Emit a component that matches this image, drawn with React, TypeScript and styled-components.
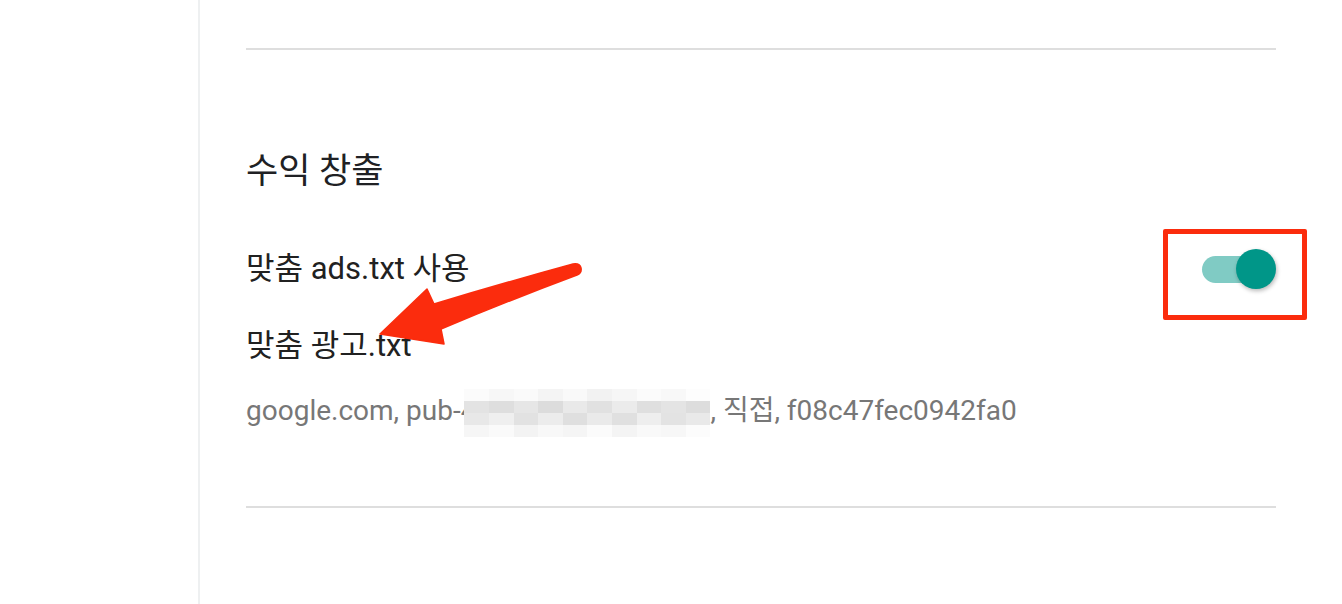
import React from 'react'
import styled, { createGlobalStyle } from 'styled-components'

const GlobalStyle = createGlobalStyle`
  html, body {
    margin: 0;
    padding: 0;
    background: #ffffff;
  }
  body {
    font-family: Roboto, "Noto Sans CJK KR", sans-serif;
  }
`

// pixelated blur that hides the publisher id
const mosaic = [
  ['#fbfbfb', '#f7f7f7', '#fafafa', '#f4f4f4', '#f9f9f9', '#f2f2f2', '#f6f6f6', '#fbfbfb', '#f8f8f8', '#fdfdfd'],
  ['#e3e3e3', '#dedede', '#e6e6e6', '#dcdcdc', '#e9e9e9', '#e1e1e1', '#ebebeb', '#dfdfdf', '#e4e4e4', '#dddddd'],
  ['#e8e8e8', '#efefef', '#e2e2e2', '#ececec', '#dfdfdf', '#eaeaea', '#e0e0e0', '#eeeeee', '#e3e3e3', '#e9e9e9'],
  ['#f6f6f6', '#fafafa', '#f3f3f3', '#f8f8f8', '#f5f5f5', '#fbfbfb', '#f4f4f4', '#f9f9f9', '#f7f7f7', '#fcfcfc'],
]

const App: React.FC = () => {
  return (
    <>
      <GlobalStyle />
      <StyledPage>
        <StyledSidebar />
        <StyledMain>
          <StyledDivider />
          <StyledSection>
            <StyledHeading>수익 창출</StyledHeading>
            <StyledSettingRow>
              <StyledLabel>맞춤 ads.txt 사용</StyledLabel>
              <StyledToggle>
                <StyledTrack />
                <StyledKnob />
                <StyledHighlight />
              </StyledToggle>
            </StyledSettingRow>
            <StyledFileName>맞춤 광고.txt</StyledFileName>
            <StyledRecord>
              google.com, pub-4
              <StyledMosaic>
                {mosaic.map((row, i) => (
                  <StyledMosaicRow key={i}>
                    {row.map((c, j) => (
                      <span key={j} style={{ background: c }} />
                    ))}
                  </StyledMosaicRow>
                ))}
              </StyledMosaic>
              , 직접, f08c47fec0942fa0
            </StyledRecord>
          </StyledSection>
          <StyledDivider />
          <StyledArrow width="215" height="90" viewBox="370 262 215 90">
            <path
              d="M 380 334 L 427 289 L 434 304 Q 500 284 573 264 Q 580 263 581 268 Q 582 273 577 275 Q 510 300 441 329 L 444 344 Z"
              fill="#fb2c0d"
              stroke="#fb2c0d"
              strokeWidth="1.5"
              strokeLinejoin="round"
            />
          </StyledArrow>
        </StyledMain>
      </StyledPage>
    </>
  )
}

const StyledPage = styled.div`
  display: flex;
  width: 1342px;
  height: 604px;
  overflow: hidden;
`

const StyledSidebar = styled.div`
  width: 198px;
  flex-shrink: 0;
  border-right: 2px solid #eef0f1;
`

const StyledMain = styled.div`
  position: relative;
  flex: 1;
  padding: 48px 66px 0 46px;
`

const StyledDivider = styled.div`
  height: 2px;
  background: #dedede;
`

const StyledSection = styled.div`
  display: flex;
  flex-direction: column;
  padding: 102px 0 75px;
`

const StyledHeading = styled.div`
  font-size: 35px;
  line-height: 40px;
  color: #202124;
`

const StyledSettingRow = styled.div`
  display: flex;
  align-items: center;
  justify-content: space-between;
  margin-top: 56px;
  height: 42px;
`

const StyledLabel = styled.div`
  font-size: 31px;
  line-height: 40px;
  color: #212121;
`

const StyledFileName = styled(StyledLabel)`
  margin-top: 36px;
`

const StyledRecord = styled.div`
  font-size: 28px;
  line-height: 40px;
  color: #777777;
  margin-top: 25px;
  white-space: nowrap;
`

const StyledMosaic = styled.span`
  display: inline-flex;
  flex-direction: column;
  vertical-align: middle;
  width: 246px;
  height: 48px;
  margin: -8px 0 -8px -12px;
  position: relative;
`

const StyledMosaicRow = styled.span`
  display: flex;
  flex: 1;
  span {
    flex: 1;
  }
`

const StyledToggle = styled.div`
  position: relative;
  width: 74px;
  height: 41px;
  display: flex;
  align-items: center;
`

const StyledTrack = styled.div`
  width: 58px;
  height: 27px;
  border-radius: 14px;
  background: #80cbc4;
`

const StyledKnob = styled.div`
  position: absolute;
  right: 0;
  top: 0;
  width: 40px;
  height: 40px;
  border-radius: 50%;
  background: #009688;
  box-shadow: 1px 2px 4px rgba(0, 0, 0, 0.28);
`

const StyledHighlight = styled.div`
  position: absolute;
  left: -39px;
  top: -20px;
  width: 144px;
  height: 91px;
  box-sizing: border-box;
  border: 5px solid #fb2c0d;
  border-radius: 2px;
`

const StyledArrow = styled.svg`
  position: absolute;
  left: 170px;
  top: 262px;
`

export default App
